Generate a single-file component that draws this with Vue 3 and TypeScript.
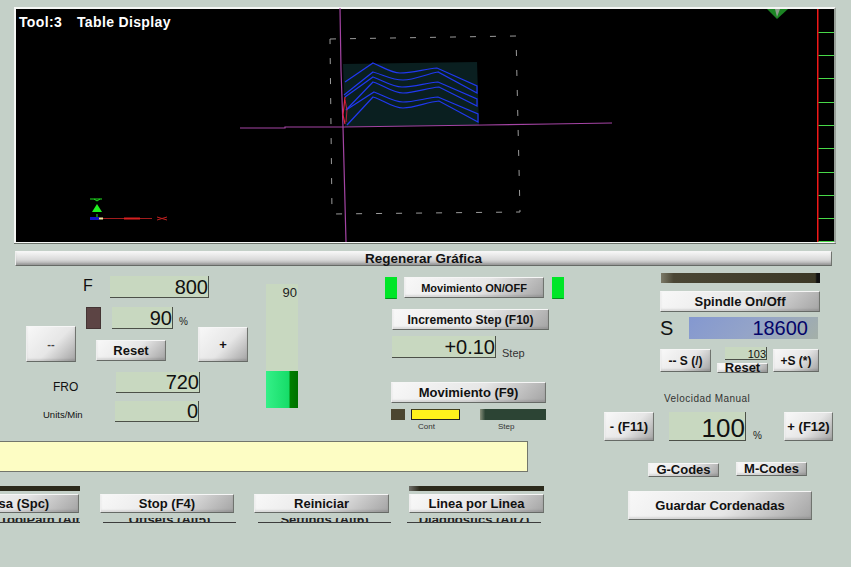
<script setup lang="ts">
const rulerTicks = [32, 55, 78, 102, 125, 148, 172, 195, 218, 241]

const toolpaths = [
  'M345 82L373 63C383 67 391 73 400 73C412 73 425 69 437 68L477 86V93L438 72C426 74 415 80 403 80C392 80 384 75 373 72L344 95',
  'M345 97L373 77C384 81 392 87 402 87C414 87 426 83 438 82L477 99V106L439 87C427 88 415 93 403 93C392 93 384 85 373 82L346 110',
  'M346 110L374 92C385 96 393 102 403 102C414 102 426 98 438 97L478 114V122L439 101C427 102 415 108 403 108C392 108 384 100 373 97L347 125'
]

const bottomTabs = ['ToolPath (Alt4)', 'Offsets (Alt5)', 'Settings (Alt6)', 'Diagnostics (Alt7)']
</script>

<template>
  <div class="screen">
    <div class="viewport">
      <svg class="scene" viewBox="16 9 803 233" width="803" height="233">
        <polygon points="343,64 477,62 479,125 345,127" fill="#0a1f20" />
        <polygon points="330,39 516,36 520,212 332,214" fill="none" stroke="#9c9c9c" stroke-dasharray="6 14" />
        <path
          v-for="(p, i) in toolpaths"
          :key="i"
          :d="p"
          fill="none"
          stroke="#2038f0"
          stroke-width="1.2"
        />
        <polyline points="340,8 341,70 343,127 344,165 346,242" fill="none" stroke="#a444a4" stroke-width="1.2" />
        <polyline points="240,128 285,128 285,127 344,127 484,125 550,124 612,123" fill="none" stroke="#a444a4" stroke-width="1.2" />
        <polyline points="345,97 343,115 345,124" fill="none" stroke="#e8203c" stroke-width="1.2" />
        <polyline points="345,100 347,110 346,122" fill="none" stroke="#e8203c" stroke-width="0.8" />

        <!-- axis marker -->
        <path d="M90 199h12M94 199l3 2 3-2M97 214v4" fill="none" stroke="#20e020" />
        <polygon points="92,212 97,204 102,212" fill="#20f020" />
        <rect x="90" y="217" width="9" height="3" fill="#1414c8" />
        <rect x="99" y="217.5" width="4" height="2" fill="#f4e8a0" />
        <line x1="103" y1="218.5" x2="152" y2="218.5" stroke="#a01c1c" />
        <line x1="124" y1="218.5" x2="140" y2="218.5" stroke="#d82020" stroke-width="2" />
        <path d="M157 217l10 3M157 220l10-3" stroke="#c02020" fill="none" />

        <polygon points="767,9 777,19 788,9" fill="#1c8424" />
        <polygon points="775,9 777,17 780,9" fill="#8c9c8c" />

        <rect x="817" y="9" width="1.5" height="233" fill="#f01818" />
        <line v-for="y in rulerTicks" :key="y" x1="818.5" :y1="y + 0.5" x2="834" :y2="y + 0.5" stroke="#48d848" />

        <text x="19" y="27" class="scene-title">Tool:3</text>
        <text x="77" y="27" class="scene-title">Table Display</text>
      </svg>
    </div>

    <button class="btn regen">Regenerar Gráfica</button>

    <div class="panel">
      <div class="left-side">
        <div class="controls">
          <div class="feed">
            <div class="row row-f">
              <span class="f-label">F</span>
              <div class="dro f-dro">800</div>
            </div>
            <div class="row row-pct">
              <span class="led led-brown"></span>
              <div class="dro pct-dro">90</div>
              <span class="unit">%</span>
            </div>
            <div class="row row-btns">
              <button class="btn minus">--</button>
              <button class="btn reset">Reset</button>
              <button class="btn plus">+</button>
            </div>
            <div class="row row-fro">
              <span class="fro-label">FRO</span>
              <div class="dro fro-dro">720</div>
            </div>
            <div class="row row-units">
              <span class="units-label">Units/Min</span>
              <div class="dro fro-dro">0</div>
            </div>
          </div>

          <div class="gauge">
            <span class="gauge-val">90</span>
            <div class="gauge-fill"></div>
          </div>

          <div class="move">
            <div class="row">
              <span class="led led-green"></span>
              <button class="btn mov-onoff">Movimiento ON/OFF</button>
              <span class="led led-green"></span>
            </div>
            <button class="btn incr">Incremento Step (F10)</button>
            <div class="row step-row">
              <div class="dro step-dro">+0.10</div>
              <span class="step-label">Step</span>
            </div>
            <button class="btn mov-f9">Movimiento (F9)</button>
            <div class="row mode-row">
              <span class="mode-led"></span>
              <span class="mode-cont"></span>
              <span class="mode-step"></span>
            </div>
            <div class="row mode-labels">
              <span class="mode-label label-cont">Cont</span>
              <span class="mode-label label-step">Step</span>
            </div>
          </div>
        </div>

        <div class="status"></div>

        <div class="run-grid">
          <span class="run-bar"></span>
          <span></span>
          <span></span>
          <span class="run-bar bar-line"></span>
          <div class="cell-clip"><button class="btn run pause">Pausa (Spc)</button></div>
          <button class="btn run">Stop (F4)</button>
          <button class="btn run">Reiniciar</button>
          <button class="btn run">Linea por Linea</button>
          <div v-for="(t, i) in bottomTabs" :key="t" class="tab" :class="'tab-' + i">
            <span>{{ t }}</span>
          </div>
        </div>
      </div>

      <div class="right-side">
        <div class="spindle-bar"></div>
        <button class="btn spindle">Spindle On/Off</button>
        <div class="row s-row">
          <span class="s-label">S</span>
          <div class="dro s-dro">18600</div>
        </div>
        <div class="row s-btns">
          <button class="btn s-minus">-- S (/)</button>
          <div class="s-mid">
            <div class="dro mini-dro">103</div>
            <button class="btn mini-reset">Reset</button>
          </div>
          <button class="btn s-plus">+S (*)</button>
        </div>
        <div class="vel-label">Velocidad Manual</div>
        <div class="row vel-row">
          <button class="btn vel-btn">- (F11)</button>
          <div class="dro vel-dro">100</div>
          <span class="unit vel-unit">%</span>
          <button class="btn vel-btn vel-plus">+ (F12)</button>
        </div>
        <div class="row codes">
          <button class="btn code g-code">G-Codes</button>
          <button class="btn code m-code">M-Codes</button>
        </div>
        <button class="btn save">Guardar Cordenadas</button>
      </div>
    </div>
  </div>
</template>

<style>
html,
body {
  margin: 0;
  background: #c4d0c8;
}
</style>

<style scoped>
.screen {
  width: 851px;
  height: 567px;
  overflow: hidden;
  background: #c4d0c8;
  font-family: "Liberation Sans", Arial, sans-serif;
  color: #111;
}
.viewport {
  width: 803px;
  height: 233px;
  margin: 7px 0 0 14px;
  padding-right: 15px;
  background: #000;
  border-top: 2px solid #f4f6f4;
  border-left: 2px solid #f4f6f4;
  border-right: 2px solid #98a098;
  border-bottom: 1px solid #f4f6f4;
  box-shadow: 0 1px 0 #6c746c;
}
.scene {
  display: block;
  overflow: visible;
}
.scene-title {
  fill: #fff;
  font: bold 14px "Liberation Sans", Arial, sans-serif;
  letter-spacing: 0.35px;
}
.btn {
  display: block;
  box-sizing: border-box;
  padding: 0;
  margin: 0;
  font-family: inherit;
  font-weight: bold;
  font-size: 13px;
  color: #111;
  white-space: nowrap;
  background: linear-gradient(135deg, #f8f8f8 0%, #e6e6e6 55%, #a4a4a4 100%);
  border: 1px solid;
  border-color: #f6f6f6 #70746f #666a66 #eeeeee;
  box-shadow: inset 0 -2px 2px rgba(0, 0, 0, 0.1);
}
.row {
  display: flex;
  align-items: flex-start;
}
.dro {
  box-sizing: border-box;
  background: #c8d8c0;
  border-right: 1px solid #4c5048;
  border-bottom: 1px solid #4c5048;
  text-align: right;
  font-size: 20px;
  line-height: 22px;
  color: #111;
  white-space: nowrap;
}
.led {
  display: block;
  box-sizing: border-box;
}
.regen {
  width: 817px;
  height: 15px;
  margin: 8px 0 0 15px;
  font-size: 13.5px;
  line-height: 13px;
  background: linear-gradient(180deg, #f6f6f6 0%, #d8d8d8 60%, #a8a8a8 100%);
}
.panel {
  display: flex;
}
.left-side {
  width: 604px;
  flex: none;
}
.controls {
  display: flex;
  height: 175px;
}

/* feed block */
.feed {
  width: 222px;
  margin-left: 26px;
}
.row-f {
  margin-top: 10px;
}
.f-label {
  width: 27px;
  margin-left: 57px;
  font-size: 16px;
  line-height: 20px;
}
.f-dro {
  width: 99px;
  height: 22px;
}
.row-pct {
  margin-top: 9px;
}
.led-brown {
  width: 15px;
  height: 22px;
  margin-left: 60px;
  background: #5c4444;
  border: 1px solid #443434;
}
.pct-dro {
  width: 61px;
  height: 22px;
  margin-left: 11px;
}
.unit {
  margin: 9px 0 0 6px;
  font-size: 10px;
  line-height: 12px;
  color: #222;
}
.row-btns {
  margin-top: -3px;
}
.minus {
  width: 50px;
  height: 36px;
  font-size: 11px;
  color: #444;
}
.reset {
  width: 70px;
  height: 21px;
  margin: 14px 0 0 20px;
}
.plus {
  width: 50px;
  height: 35px;
  margin: 1px 0 0 32px;
}
.row-fro {
  margin-top: 10px;
}
.fro-label {
  width: 90px;
  padding: 5px 0 0 27px;
  box-sizing: border-box;
  font-size: 12px;
  line-height: 20px;
}
.fro-dro {
  width: 84px;
  height: 21px;
  line-height: 20px;
}
.row-units {
  margin-top: 4px;
}
.units-label {
  width: 89px;
  padding-left: 17px;
  box-sizing: border-box;
  font-size: 9.5px;
  line-height: 28px;
}

/* gauge */
.gauge {
  display: flex;
  flex-direction: column;
  justify-content: space-between;
  box-sizing: border-box;
  width: 32px;
  height: 124px;
  margin: 18px 0 0 18px;
  background: #c8d8c0;
}
.gauge-val {
  padding: 1px 1px 0 0;
  text-align: right;
  font-size: 13px;
  line-height: 15px;
  color: #222;
}
.gauge-fill {
  height: 37px;
  background: linear-gradient(90deg, #34f088 0%, #16dc68 72%, #008000 75%, #007000 100%);
}

/* movement block */
.move {
  width: 180px;
  margin: 11px 0 0 87px;
}
.led-green {
  width: 12px;
  height: 22px;
  background: #00e628;
  border: 1px solid #00e628;
  border-bottom-color: #0a8a20;
}
.mov-onoff {
  width: 140px;
  height: 21px;
  margin: 0 8px 0 7px;
  font-size: 11px;
}
.incr {
  width: 157px;
  height: 21px;
  margin: 10px 0 0 7px;
  font-size: 12px;
}
.step-row {
  margin: 6px 0 0 7px;
}
.step-dro {
  width: 104px;
  height: 22px;
}
.step-label {
  margin: 11px 0 0 6px;
  font-size: 11px;
  line-height: 12px;
  color: #333;
}
.mov-f9 {
  width: 155px;
  height: 21px;
  margin: 23px 0 0 6px;
  font-size: 13px;
}
.mode-row {
  margin: 6px 0 0 6px;
}
.mode-led {
  width: 14px;
  height: 11px;
  background: #4c4630;
}
.mode-cont {
  box-sizing: border-box;
  width: 49px;
  height: 11px;
  margin-left: 6px;
  background: #fff21c;
  border: 1px solid #222;
  border-top: 1px solid #44401c;
}
.mode-step {
  width: 66px;
  height: 11px;
  margin-left: 20px;
  background: linear-gradient(90deg, #88907c 0%, #2c4434 8%, #2c4434 100%);
}
.mode-labels {
  margin-top: 1px;
}
.mode-label {
  font-size: 8px;
  line-height: 12px;
  color: #333;
}
.label-cont {
  margin-left: 33px;
}
.label-step {
  margin-left: 63px;
}

/* status strip and the bottom run buttons */
.status {
  box-sizing: border-box;
  width: 528px;
  height: 31px;
  background: #fdfdc4;
  border: 1px solid #72766c;
  border-left: none;
}
.run-grid {
  display: grid;
  grid-template-columns: 80px 134px 135px 135px;
  grid-template-rows: 5px 20px 6px;
  column-gap: 20px;
  row-gap: 3px;
  margin-top: 14px;
}
.run-bar {
  background: #2c2a1c;
}
.bar-line {
  background: linear-gradient(90deg, #70706a 0%, #2c2a1c 8%, #2c2a1c 100%);
}
.run {
  width: 100%;
  height: 19px;
}
.cell-clip {
  width: 80px;
  overflow: hidden;
}
.pause {
  width: 134px;
  margin-left: -55px;
}
.tab {
  box-sizing: border-box;
  height: 5px;
  margin-top: 1px;
  overflow: hidden;
  text-align: center;
  font-size: 13px;
  font-weight: bold;
  line-height: 4px;
  color: #222;
  border-bottom: 1px solid #3c3c3c;
}
.tab span {
  display: block;
  white-space: nowrap;
}
.tab-1 {
  margin-left: 3px;
  margin-right: -2px;
}
.tab-2 {
  margin-left: 4px;
  margin-right: -2px;
}
.tab-3 {
  margin-left: -2px;
  margin-right: 3px;
}

/* spindle side */
.right-side {
  flex: none;
  width: 230px;
}
.spindle-bar {
  width: 159px;
  height: 10px;
  margin: 7px 0 0 57px;
  background: linear-gradient(90deg, #7c7a68 0%, #4a4634 8%, #3c3826 97%, #111 98%);
}
.spindle {
  width: 160px;
  height: 21px;
  margin: 8px 0 0 56px;
}
.s-row {
  margin: 5px 0 0 56px;
}
.s-label {
  width: 29px;
  font-size: 20px;
  line-height: 23px;
}
.s-dro {
  width: 129px;
  height: 22px;
  padding-right: 10px;
  border: none;
  color: #04046a;
  background: linear-gradient(135deg, #8498d0 0%, #94a4c8 50%, #a4b0a8 100%);
}
.s-btns {
  margin: 7px 0 0 56px;
}
.s-minus {
  width: 51px;
  height: 23px;
  margin-top: 2px;
  font-size: 12px;
}
.s-mid {
  width: 51px;
  margin-left: 6px;
}
.mini-dro {
  width: 42px;
  height: 13px;
  margin-left: 8px;
  font-size: 11px;
  line-height: 14px;
}
.mini-reset {
  width: 51px;
  height: 10px;
  margin-top: 3px;
  font-size: 13px;
  line-height: 8px;
}
.s-plus {
  width: 46px;
  height: 23px;
  margin: 2px 0 0 5px;
  font-size: 12px;
}
.vel-label {
  margin: 20px 0 0 60px;
  font-size: 10px;
  line-height: 12px;
  letter-spacing: 0.45px;
  color: #333;
}
.vel-row {
  margin-top: 7px;
}
.vel-btn {
  width: 50px;
  height: 29px;
}
.vel-dro {
  width: 77px;
  height: 29px;
  margin-left: 15px;
  font-size: 26px;
  line-height: 32px;
  overflow: hidden;
}
.vel-unit {
  width: 31px;
  margin: 18px 0 0 7px;
  line-height: 11px;
}
.vel-plus {
  width: 49px;
}
.codes {
  margin-top: 21px;
}
.code {
  width: 71px;
  height: 14px;
  line-height: 12px;
}
.g-code {
  margin: 1px 0 0 44px;
}
.m-code {
  margin-left: 17px;
}
.save {
  width: 184px;
  height: 29px;
  margin: 14px 0 0 24px;
}
</style>
